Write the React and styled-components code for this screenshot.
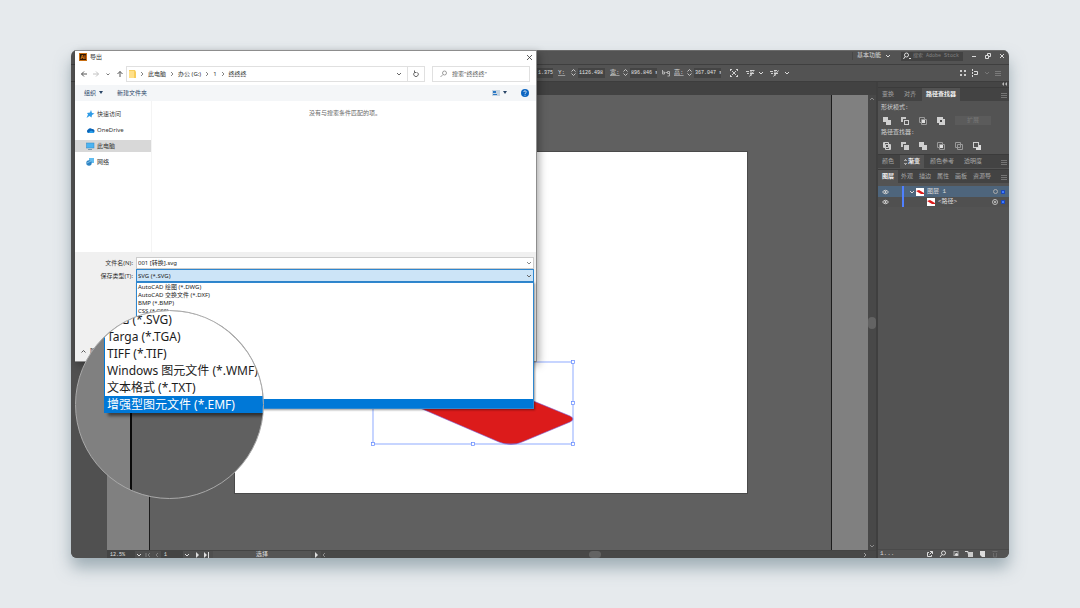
import React from "react";
import styled, { createGlobalStyle, css } from "styled-components";

const mono = '"Liberation Mono", "Noto Sans CJK SC", monospace';
const sans = '"Noto Sans", "Noto Sans CJK SC", sans-serif';

const GlobalStyle = createGlobalStyle`
  *, *::before, *::after { box-sizing: border-box; }
  body { margin: 0; background: #e6eaed; font-family: ${sans}; font-size: 6px; line-height: 8px; }
  button, input, select { font: inherit; color: inherit; margin: 0; padding: 0; border: 0; border-radius: 0; background: none; min-width: 0; }
  ul { margin: 0; padding: 0; list-style: none; }
  a { color: inherit; text-decoration: none; }
`;

const Page = styled.main`
  display: flex;
  min-height: 100vh;
  padding: 50px 71px;
`;

const AppWindow = styled.div`
  position: relative;
  flex: 1;
  display: flex;
  min-width: 0;
  border-radius: 6px;
  box-shadow: 0 10px 16px rgba(90, 115, 128, 0.5);
`;

const Frame = styled.div`
  flex: 1;
  min-width: 0;
  display: flex;
  flex-direction: column;
  overflow: hidden;
  border-radius: 6px;
  background: #535353;
  color: #dcdcdc;
  font-family: ${mono};
`;

const IconSvg = styled.svg`
  display: block;
  flex: none;
`;

const Icon = ({ w = 8, h = 8, sw = 1, stroke = "currentColor", fill = "none", children }) => (
  <IconSvg width={w} height={h} viewBox={`0 0 ${w} ${h}`} strokeWidth={sw} stroke={stroke} fill={fill} aria-hidden="true">
    {children}
  </IconSvg>
);

const Chevron = ({ color = "currentColor" }) => (
  <Icon w={6} h={6} stroke={color}><path d="M1 2l2 2 2-2" /></Icon>
);

const IconButton = styled.button`
  display: flex;
  align-items: center;
  justify-content: center;
  flex: none;
  width: ${(p) => p.$w || 8}px;
  height: 8px;
  opacity: ${(p) => (p.$dim ? 0.35 : 1)};
`;

/* Application bars */

const TitleBar = styled.header`
  display: flex;
  align-items: center;
  justify-content: flex-end;
  height: 15px;
  padding: 0 3px 3px 0;
  border-top: 1px solid #6a6a6a;
  border-bottom: 1px solid #3f3f3f;
`;

const Workspace = styled.button`
  display: flex;
  align-items: center;
  gap: 4px;
  padding: 0 10px 0 4px;
  border-left: 1px solid #474747;
`;

const StockSearch = styled.label`
  display: flex;
  align-items: center;
  width: 62px;
  height: 9px;
  margin-right: 7px;
  padding-left: 2px;
  gap: 2px;
  background: #424242;
  input { width: 48px; font-size: 5px; line-height: 8px; }
  input::placeholder { color: #858585; }
`;

const WindowButtons = styled.div`
  display: flex;
  gap: 6px;
`;

const ControlBar = styled.div`
  display: flex;
  align-items: center;
  justify-content: space-between;
  height: 17px;
  padding: 0 8px 1px 466px;
  border-bottom: 1px solid #3d3d3d;
`;

const Cluster = styled.div`
  display: flex;
  align-items: center;
  gap: ${(p) => p.$gap || 0}px;
`;

const NumberField = styled.label`
  display: flex;
  align-items: center;
  margin-right: 5px;
  > span { min-width: 11px; text-decoration: underline; text-decoration-color: #9a9a9a; }
  svg { margin: 0 2px; }
  input { width: ${(p) => (p.$short ? 16 : 27)}px; height: 10px; padding-left: 1px; font-size: 5px; background: #444; color: #e4e4e4; }
`;

const Stepper = () => (
  <Icon w={5} h={9} stroke="#c4c4c4"><path d="M.5 3.5l2-2 2 2M.5 5.500l2 2 2-2" /></Icon>
);

/* Work area */

const Work = styled.div`
  flex: 1;
  min-height: 0;
  display: flex;
`;

const ToolColumn = styled.div`
  width: 36px;
  flex: none;
  background: #505050;
`;

const Document = styled.section`
  flex: 1;
  min-width: 0;
  display: flex;
  flex-direction: column;
`;

const TabStrip = styled.div`
  height: 13px;
  background: #424242;
`;

const Viewport = styled.div`
  flex: 1;
  display: flex;
  min-height: 0;
`;

const Pasteboard = styled.div`
  flex: 1;
  display: flex;
  align-items: center;
  justify-content: center;
  background: #606060;
  border: solid #1c1c1c;
  border-width: 0 1px;
`;

const Margin = styled.div`
  width: ${(p) => p.$w}px;
  background: #808080;
`;

const Artboard = styled.svg`
  display: block;
  width: 512px;
  height: 341px;
  background: #fff;
  outline: 1px solid #4a4a4a;
`;

const ScrollColumn = styled.div`
  width: 8px;
  display: flex;
  flex-direction: column;
  align-items: center;
  justify-content: space-between;
  background: #484848;
`;

const Thumb = styled.span`
  display: block;
  width: ${(p) => p.$w}px;
  height: ${(p) => p.$h}px;
  border-radius: 4px;
  background: #636363;
`;

const StatusBar = styled.footer`
  display: flex;
  align-items: center;
  height: 8px;
  background: #4f4f4f;
  border-top: 1px solid #444;
`;

const StatusInput = styled.input`
  width: ${(p) => p.$w}px;
  height: 8px;
  padding-left: 3px;
  font-size: 5px;
  background: #444;
  color: #e0e0e0;
`;

const StatusTool = styled.span`
  width: 98px;
  margin-left: 2px;
  text-align: center;
  background: #555;
`;

const ScrollRow = styled.div`
  flex: 1;
  display: flex;
  align-items: center;
  justify-content: space-between;
  height: 8px;
  padding-right: 8px;
  background: #484848;
`;

/* Right panels */

const Panels = styled.aside`
  width: 133px;
  flex: none;
  display: flex;
  flex-direction: column;
  border-left: 2px solid #3f3f3f;
  background: #535353;
`;

const CollapseBar = styled.div`
  display: flex;
  justify-content: flex-end;
  height: 5px;
  padding-right: 2px;
  background: #454545;
`;

const Tabs = styled.div`
  display: flex;
  gap: ${(p) => (p.$tight ? 0 : 2)}px;
  height: 14px;
  margin-top: ${(p) => (p.$tight ? 1 : 0)}px;
  padding-right: 2px;
  background: #434343;
  border-top: 1px solid #3b3b3b;
  > :last-child { margin-left: auto; align-self: center; }
`;

const Tab = styled.button`
  display: flex;
  align-items: center;
  padding: 0 ${(p) => (p.$tight ? 3 : 4)}px;
  white-space: nowrap;
  color: #a6a6a6;
  ${(p) => p.$active && css`background: #535353; color: #f2f2f2; font-weight: 700;`}
`;

const PathfinderBody = styled.div`
  display: flex;
  flex-direction: column;
  gap: 4px;
  padding: 3px 4px 4px 3px;
  color: #cfcfcf;
`;

const ShapeRow = styled.div`
  display: flex;
  align-items: center;
  gap: 10px;
  height: 9px;
  padding-left: 2px;
`;

const ExpandButton = styled.button`
  width: 36px;
  height: 9px;
  background: #5b5b5b;
  color: #777;
`;

const LayerList = styled.ul`
  flex: 1;
  padding-top: 3px;
`;

const Layer = styled.li`
  display: flex;
  align-items: center;
  height: ${(p) => (p.$active ? 11 : 10)}px;
  padding: 0 4px;
  background: ${(p) => (p.$active ? "#4e657c" : "#505050")};
  > i { width: 2px; align-self: stretch; margin: 0 5px 0 13px; background: #4f80ff; }
  > span { flex: 1; padding-left: 3px; }
  > b { width: 4px; height: 4px; margin-left: 3px; background: #3f7bff; border: 1px solid #1d49b8; }
`;

const Twirl = styled.div`
  width: ${(p) => (p.$deep ? 18 : 7)}px;
`;

const PanelFooter = styled.footer`
  display: flex;
  align-items: center;
  gap: 5px;
  height: 9px;
  padding: 0 10px 0 2px;
  border-top: 1px solid #4a4a4a;
  > span { flex: 1; }
`;

/* Export dialog */

const Dialog = styled.section`
  position: absolute;
  left: 4px;
  top: 0;
  width: 462px;
  height: 312px;
  display: flex;
  flex-direction: column;
  background: #fff;
  color: #333;
  border: solid #8d8d8d;
  border-width: 1px 1px 1px 0;
  box-shadow: 2px 3px 8px rgba(0, 0, 0, 0.35);
`;

const DialogTitle = styled.div`
  display: flex;
  align-items: center;
  gap: 3px;
  height: 12px;
  padding: 0 3px 0 4px;
  > span { flex: 1; }
`;

const AppMark = styled.b`
  width: 8px;
  height: 8px;
  border: 1px solid #c86f13;
  background: #2e1500;
  color: #f08a1c;
  font-size: 5px;
  line-height: 6px;
  text-align: center;
`;

const AddressRow = styled.div`
  display: flex;
  align-items: center;
  height: 22px;
  padding: 0 6px 0 5px;
  color: #555;
`;

const NavButtons = styled.div`
  display: flex;
  gap: 4px;
  width: 46px;
`;

const AddressBox = styled.nav`
  flex: 1;
  display: flex;
  align-items: center;
  gap: 4px;
  height: 16px;
  padding-left: 2px;
  border: 1px solid #e0e0e0;
  color: #333;
  > :nth-last-child(2) { margin-left: auto; }
`;

const Refresh = styled.button`
  display: flex;
  align-items: center;
  justify-content: center;
  width: 17px;
  height: 14px;
  border-left: 1px solid #e0e0e0;
`;

const SearchBox = styled.label`
  display: flex;
  align-items: center;
  gap: 4px;
  width: 98px;
  height: 16px;
  margin-left: 7px;
  padding-left: 7px;
  border: 1px solid #e0e0e0;
  color: #888;
  input { flex: 1; }
  input::placeholder { color: #606060; opacity: 1; }
`;

const Toolbar = styled.div`
  display: flex;
  align-items: center;
  gap: 14px;
  height: 16px;
  padding: 0 7px 0 9px;
  background: #f4f6f8;
  color: #2a4668;
  > :nth-child(3) { margin-left: auto; }
  button { display: flex; align-items: center; gap: 3px; }
`;

const Browser = styled.div`
  flex: 1;
  display: flex;
  color: #666;
  > p { flex: 1; margin: 0; padding: 8px 0 0 2px; text-align: center; }
`;

const Places = styled.ul`
  width: 77px;
  padding-top: 7px;
  border-right: 1px solid #f4f4f4;
  color: #333;
`;

const Place = styled.li`
  height: 12px;
  margin-bottom: 4px;
  padding-left: 11px;
  background: ${(p) => (p.$active ? "#d8d8d8" : "transparent")};
  a { display: flex; align-items: center; gap: 2px; height: 12px; }
`;

const SavePane = styled.div`
  position: relative;
  display: flex;
  flex-direction: column;
  height: 109px;
  padding: 4px 2px 6px 0;
  background: #f0f0f0;
`;

const FieldRow = styled.div`
  display: flex;
  align-items: center;
  height: 13px;
  label { width: 61px; padding-right: 3px; text-align: right; }
`;

const fieldBox = css`
  flex: 1;
  height: 12px;
  padding: 0 1px;
  line-height: 10px;
  color: #222;
  display: flex;
  align-items: center;
`;

const FileName = styled.div`
  ${fieldBox}
  border: 1px solid #ccc;
  background: #fff;
  input { flex: 1; }
`;

const FileType = styled.div`
  ${fieldBox}
  height: 13px;
  border: 1px solid #2f87cf;
  background: #cce4f7;
  select { flex: 1; appearance: none; }
`;

const TypeMenu = styled.ul`
  position: absolute;
  top: 30px;
  left: 61px;
  right: 2px;
  display: flex;
  flex-direction: column;
  height: 127px;
  border: 1px solid #2f87cf;
  background: #fff;
  color: #222;
  box-shadow: 1px 1px 2px rgba(0, 0, 0, 0.4);
  li { height: 8px; padding-left: 1px; }
  li[aria-selected="true"] { margin-top: auto; height: 9px; background: #0078d7; }
`;

const HideFolders = styled.button`
  display: flex;
  align-items: center;
  gap: 4px;
  margin: auto auto 0 6px;
`;

/* Magnifier */

const Lens = styled.div`
  position: absolute;
  left: 4px;
  top: 260px;
  width: 189px;
  height: 189px;
  overflow: hidden;
  border: 1px solid #a9a9a9;
  border-radius: 50%;
  background: linear-gradient(to right, #808080 54px, #0a0a0a 54px 56px, #606060 56px);
  color: #1c1c1c;
  font-size: 12px;
  line-height: 17px;
`;

const LensList = styled.ul`
  margin-left: 28px;
  background: #fff;
  box-shadow: 4px 3px 3px rgba(0, 0, 0, 0.5);
  li { height: 17px; padding-left: 2px; border-left: 1px solid #0078d7; white-space: nowrap; }
  li:last-child { background: #0078d7; color: #fff; }
`;

const shapes = {
  unite: <path d="M0 0h5v3h3v5h-5v-3h-3z" fill="#d0d0d0" stroke="none" />,
  minus: <><path d="M0 0h5v2h-3v3h-2z" fill="#c8c8c8" stroke="none" /><rect x="3.5" y="3.5" width="4" height="4" /></>,
  intersect: <><path d="M5.500 2.500v-2h-5v5h2M2.500 2.500h5v5h-5z" stroke="#999" /><rect x="3" y="3" width="3" height="3" fill="#e0e0e0" stroke="none" /></>,
  exclude: <><path d="M0 0h6v2h2v6h-6v-2h-2z" fill="#d0d0d0" stroke="none" /><rect x="3" y="3" width="2" height="2" fill="#444" stroke="none" /></>,
  divide: <><path d="M.5.5h5v5h-5zM2.500 2.500h5v5h-5z" /><path d="M1 1h1v4h-1zM6 3h1v4h-1z" fill="#ccc" stroke="none" /></>,
  trim: <><path d="M0 0h5v2h-3v3h-2z" fill="#c8c8c8" stroke="none" /><rect x="3" y="3" width="5" height="5" fill="#ccc" stroke="none" /></>,
  outline: <path d="M.5.5h5v5h-5zM2.500 2.500h5v5h-5z" stroke="#999" />,
  back: <><rect x=".5" y=".5" width="5" height="5" /><path d="M6 3h2v5h-5v-2h3z" fill="#ddd" stroke="none" /></>,
};

const ShapeButton = ({ kind }) => (
  <IconButton aria-label={kind}><Icon>{shapes[kind]}</Icon></IconButton>
);

const MenuIcon = () => (
  <Icon w={6} h={6} stroke="#8b8b8b" sw={0.7}><path d="M0 1.500h6M0 3.500h6M0 5.500h6" /></Icon>
);

const Eye = () => (
  <Icon w={7} h={6}><path d="M.5 3q3-3.500 6 0q-3 3.500-6 0z" stroke="#ccc" /><circle cx="3.500" cy="3" r="1" fill="#ddd" stroke="none" /></Icon>
);

const LayerThumb = () => (
  <Icon w={8} h={8} stroke="none"><path d="M0 0h8v8h-8z" fill="#fff" /><path d="M0 3l3-1 5 3v1l-3 0z" fill="#dc1b1b" /></Icon>
);

const Caret = () => (
  <Icon w={4} h={4} stroke="none" fill="#2a4668"><path d="M0 0h4l-2 3z" /></Icon>
);

const handles = [[338, 210], [338, 251], [338, 292], [238, 292], [138, 292]];

const types = ["AutoCAD 绘图 (*.DWG)", "AutoCAD 交换文件 (*.DXF)", "BMP (*.BMP)", "CSS (*.CSS)"];
const zoomedTypes = ["SVG (*.SVG)", "Targa (*.TGA)", "TIFF (*.TIF)", "Windows 图元文件 (*.WMF)", "文本格式 (*.TXT)", "增强型图元文件 (*.EMF)"];

const placeIcons = {
  quick: <path d="M5 0l1 3 2.500.5-2.500 1.500-.5 2.500-2-1.500-3 2 1.500-3.500-1-1.500 3-.5z" fill="#2f9be6" stroke="none" />,
  cloud: <><path d="M2 7a2 2 0 0 1 0-3.500a2.500 2.500 0 0 1 4-.5a2 2 0 0 1 1 4z" fill="#0a64b8" stroke="none" /><path d="M2 7l3-2.500 3 1.500q0 1-1 1z" fill="#28a0ec" stroke="none" /></>,
  computer: <><rect x=".5" y="1" width="7.500" height="5" fill="#4cb4f2" stroke="#2f86c4" strokeWidth=".5" /><path d="M2 7.500h4" stroke="#7d99ab" /></>,
  network: <><rect x="3" y="0" width="5" height="5" fill="#63bdf0" stroke="none" /><circle cx="3" cy="5" r="2.700" fill="#2d83c3" stroke="none" /><path d="M1 5l4-2" stroke="#a5dbf8" strokeWidth=".7" /></>,
};

const places = [["quick", "快速访问"], ["cloud", "OneDrive"], ["computer", "此电脑"], ["network", "网络"]];

const Crumb = () => <Icon w={4} h={6} sw={0.8} stroke="#666"><path d="M1 1l2 2-2 2" /></Icon>;

function ApplicationBars() {
  return (
    <>
      <TitleBar>
        <Workspace>基本功能 <Chevron /></Workspace>
        <StockSearch>
          <Icon><circle cx="3.500" cy="3" r="2" /><path d="M2 4.500l-1.500 2.500M6 6.500h2" /></Icon>
          <input aria-label="搜索 Adobe Stock" placeholder="搜索 Adobe Stock" />
        </StockSearch>
        <WindowButtons>
          <IconButton aria-label="最小化"><Icon><path d="M2 4.500h4" /></Icon></IconButton>
          <IconButton aria-label="还原"><Icon><path d="M1.500 3.500h3v3h-3zM3.500 3v-1.500h3v3h-2" /></Icon></IconButton>
          <IconButton aria-label="关闭"><Icon><path d="M2 2l4 4M6 2l-4 4" /></Icon></IconButton>
        </WindowButtons>
      </TitleBar>
      <ControlBar>
        <Cluster>
          <NumberField $short><input aria-label="X" defaultValue="1.375" /></NumberField>
          <NumberField><span>Y:</span><Stepper /><input aria-label="Y" defaultValue="1126.498" /></NumberField>
          <NumberField><span>宽:</span><Stepper /><input aria-label="宽" defaultValue="896.846 s" /></NumberField>
          <Icon stroke="#b0b0b0"><path d="M.5 1v4h2v-2h-2M3.500 3.500h2M5.500 2.500h2v2h-2zM7.500 4v3h-2" /></Icon>
          <Cluster $gap={4}>
            <span />
            <NumberField><span>高:</span><Stepper /><input aria-label="高" defaultValue="367.047 s" /></NumberField>
          </Cluster>
          <Cluster $gap={1}>
            <IconButton $w={16} aria-label="缩放"><Icon sw={0.9}><path d="M0 .5h2M.5 0v2M6 .5h2M7.500 0v2M0 7.500h2M.5 6v2M6 7.500h2M7.500 6v2M2 2l4 4M6 2l-4 4" /></Icon></IconButton>
            <IconButton $w={14} aria-label="对齐到"><Icon w={9} sw={0.9}><path d="M0 2.500h3M1 4.500h2M4 1.500h4.500M4 4.500h4M5 1v6M3.500 7.500l4-5" /></Icon></IconButton>
            <Chevron />
            <IconButton $w={18} aria-label="编辑"><Icon w={9} sw={0.9}><path d="M0 2.500h3M1 4.500h2M4 1.500h3M4 4.500h4M5 1v6M3.500 7.500l5-6" /></Icon></IconButton>
            <Chevron />
          </Cluster>
        </Cluster>
        <Cluster $gap={5}>
          <Icon w={6} h={6} stroke="none" fill="#ccc"><path d="M0 0h2v2h-2zM4 0h2v2h-2zM0 4h2v2h-2zM4 4h2v2h-2z" /></Icon>
          <Icon><path d="M1.500 0v2M1.500 3v2M1.500 6v2M3 2.500h3.500v3h-3.500" /></Icon>
          <Chevron color="#777" />
          <MenuIcon />
        </Cluster>
      </ControlBar>
    </>
  );
}

function DocumentArea() {
  return (
    <Document>
      <TabStrip />
      <Viewport>
        <Margin $w={42} />
        <Pasteboard>
          <Artboard viewBox="0 0 512 341">
            <path
              d="M143 236L194 212Q200 208 208 212L335 264Q341 267 335 270L287 290Q276 295 264 290L143 238Q138 237 143 236z"
              fill="#dc1b1b" stroke="#7a5fd8" strokeWidth=".6"
            />
            <rect x="138" y="210" width="200" height="82" fill="none" stroke="#5f86ff" strokeWidth=".7" />
            {handles.map(([x, y]) => (
              <rect key={`${x}-${y}`} x={x - 1.5} y={y - 1.5} width="3" height="3" fill="#fff" stroke="#5f86ff" strokeWidth=".7" />
            ))}
          </Artboard>
        </Pasteboard>
        <Margin $w={36} />
        <ScrollColumn>
          <Icon w={6} h={8} stroke="#8c8c8c"><path d="M1 5l2-2 2 2" /></Icon>
          <Thumb $w={8} $h={12} />
          <Icon w={6} h={8} stroke="#8c8c8c"><path d="M1 3l2 2 2-2" /></Icon>
        </ScrollColumn>
      </Viewport>
      <StatusBar>
        <StatusInput $w={28} aria-label="缩放比例" defaultValue="12.5%" />
        <IconButton aria-label="缩放菜单"><Chevron /></IconButton>
        <IconButton $dim $w={10} aria-label="第一个"><Icon w={6} h={6}><path d="M1 1v4M5 1l-2 2 2 2" /></Icon></IconButton>
        <IconButton $dim aria-label="上一个"><Icon w={6} h={6}><path d="M4 1l-2 2 2 2" /></Icon></IconButton>
        <StatusInput $w={22} aria-label="画板" defaultValue="1" />
        <IconButton aria-label="画板菜单"><Chevron /></IconButton>
        <IconButton $w={12} aria-label="下一个"><Icon w={6} h={6} stroke="none" fill="#ddd"><path d="M2 0l3 3-3 3z" /></Icon></IconButton>
        <IconButton aria-label="最后一个"><Icon w={6} h={6} stroke="none" fill="#ddd"><path d="M0 0l3 3-3 3zM4 0h1v6h-1z" /></Icon></IconButton>
        <StatusTool>选择</StatusTool>
        <IconButton $w={10} aria-label="状态菜单"><Icon w={6} h={6} stroke="none" fill="#ddd"><path d="M2 0l3 3-3 3z" /></Icon></IconButton>
        <ScrollRow>
          <Icon w={6} h={6} stroke="#8c8c8c"><path d="M4 1l-2 2 2 2" /></Icon>
          <Thumb $w={12} $h={7} />
          <Icon w={6} h={6} stroke="#a0a0a0"><path d="M2 1l2 2-2 2" /></Icon>
        </ScrollRow>
      </StatusBar>
    </Document>
  );
}

function SidePanels() {
  return (
    <Panels>
      <CollapseBar><Icon w={5} h={4} stroke="none" fill="#bbb"><path d="M2 0v4l-2-2zM5 0v4l-2-2z" /></Icon></CollapseBar>
      <Tabs>
        <Tab>变换</Tab>
        <Tab>对齐</Tab>
        <Tab $active>路径查找器</Tab>
        <MenuIcon />
      </Tabs>
      <PathfinderBody>
        <span>形状模式:</span>
        <ShapeRow>
          {["unite", "minus", "intersect", "exclude"].map((k) => <ShapeButton key={k} kind={k} />)}
          <ExpandButton>扩展</ExpandButton>
        </ShapeRow>
        <span>路径查找器:</span>
        <ShapeRow>
          {["divide", "trim", "unite", "intersect", "outline", "back"].map((k) => <ShapeButton key={k} kind={k} />)}
        </ShapeRow>
      </PathfinderBody>
      <Tabs>
        <Tab>颜色</Tab>
        <Tab $active><Icon w={4} h={8} sw={0.8}><path d="M.5 3l1-1.500 1 1.500M.5 5l1 1.500 1-1.500" /></Icon>渐变</Tab>
        <Tab>颜色参考</Tab>
        <Tab>透明度</Tab>
        <MenuIcon />
      </Tabs>
      <Tabs $tight>
        <Tab $active>图层</Tab>
        {["外观", "描边", "属性", "画板", "资源导"].map((t) => <Tab key={t} $tight>{t}</Tab>)}
        <MenuIcon />
      </Tabs>
      <LayerList>
        <Layer $active>
          <Eye /><i />
          <Twirl><Chevron /></Twirl>
          <LayerThumb />
          <span>图层 1</span>
          <Icon w={5} h={5}><circle cx="2.500" cy="2.500" r="2" stroke="#aaa" /></Icon><b />
        </Layer>
        <Layer>
          <Eye /><i />
          <Twirl $deep />
          <LayerThumb />
          <span>&lt;路径&gt;</span>
          <Icon w={6} h={6}><circle cx="3" cy="3" r="2.500" stroke="#bbb" /><circle cx="3" cy="3" r="1" fill="#ccc" stroke="none" /></Icon><b />
        </Layer>
      </LayerList>
      <PanelFooter>
        <span>1...</span>
        <IconButton aria-label="导出"><Icon><path d="M3 2.500h-1.500v4h4v-1.500M4 1.500h2.500v2.500M3.500 4.500l3-3" /></Icon></IconButton>
        <IconButton aria-label="定位"><Icon><circle cx="4.500" cy="3" r="2" /><path d="M3 4.500l-2 2.500" /></Icon></IconButton>
        <IconButton aria-label="蒙版"><Icon><rect x="2" y="1.500" width="4" height="4" stroke="#aaa" /><circle cx="4.500" cy="4.500" r="1.500" fill="#ddd" stroke="none" /></Icon></IconButton>
        <IconButton aria-label="子图层"><Icon><path d="M0 1.500h3v2" /><rect x="3" y="2" width="5" height="5" fill="#ccc" stroke="none" /></Icon></IconButton>
        <IconButton aria-label="新建图层"><Icon><path d="M2 1h5v6h-3l-2-2z" fill="#ddd" stroke="none" /></Icon></IconButton>
        <IconButton $dim aria-label="删除"><Icon><path d="M1.500 1.500h5M2.500 3v4h3v-4" stroke="#999" /></Icon></IconButton>
      </PanelFooter>
    </Panels>
  );
}

function ExportDialog() {
  return (
    <Dialog role="dialog" aria-label="导出">
      <DialogTitle>
        <AppMark>Ai</AppMark>
        <span>导出</span>
        <IconButton aria-label="关闭"><Icon sw={0.8}><path d="M2 2l5 5M7 2l-5 5" /></Icon></IconButton>
      </DialogTitle>
      <AddressRow>
        <NavButtons>
          <IconButton aria-label="后退"><Icon><path d="M7 4h-5.500M4 1.500l-2.500 2.500 2.500 2.500" /></Icon></IconButton>
          <IconButton $dim aria-label="前进"><Icon><path d="M1 4h5.500M4 1.500l2.500 2.500-2.500 2.500" /></Icon></IconButton>
          <IconButton aria-label="最近"><Icon sw={0.8}><path d="M2.500 3.500l1.500 1.500 1.500-1.500" /></Icon></IconButton>
          <IconButton aria-label="向上"><Icon><path d="M4 7v-5.500M1.500 4l2.500-2.500 2.500 2.500" /></Icon></IconButton>
        </NavButtons>
        <AddressBox>
          <Icon w={7} h={8} stroke="none"><path d="M0 0h6l1 2v6h-7z" fill="#f7cd5c" /><path d="M0 1h5v7h-5z" fill="#ffe08a" /></Icon>
          <Crumb /><a href="#pc">此电脑</a>
          <Crumb /><a href="#g">办公 (G:)</a>
          <Crumb /><a href="#1">1</a>
          <Crumb /><a href="#folder">终终终</a>
          <IconButton aria-label="历史"><Chevron color="#666" /></IconButton>
          <Refresh aria-label="刷新"><Icon sw={0.9} stroke="#555"><path d="M5.500 2.500a2.300 2.300 0 1 1-3 0M2.500 .5v2h2" /></Icon></Refresh>
        </AddressBox>
        <SearchBox>
          <Icon sw={0.8}><circle cx="4.500" cy="3" r="2" /><path d="M3 4.500l-2.500 2.500" /></Icon>
          <input aria-label="搜索" placeholder={'搜索"终终终"'} />
        </SearchBox>
      </AddressRow>
      <Toolbar>
        <button>组织 <Caret /></button>
        <button>新建文件夹</button>
        <button aria-label="视图">
          <Icon w={8} h={6} stroke="none"><path d="M0 0h8v6h-8z" fill="#c6d5e2" /><path d="M1 1h3v2h-3zM1 4h4v1h-4z" fill="#2b78c4" /></Icon>
          <Caret />
        </button>
        <button aria-label="帮助"><Icon w={8} h={8} stroke="none"><circle cx="4" cy="4" r="4" fill="#0d66c2" /><path d="M2.800 3a1.200 1.200 0 1 1 1.700 1.100q-.5.2-.5.9M4 5.800v.9" fill="none" stroke="#fff" strokeWidth=".8" /></Icon></button>
      </Toolbar>
      <Browser>
        <Places>
          {places.map(([icon, label]) => (
            <Place key={icon} $active={icon === "computer"}>
              <a href={`#${icon}`}><Icon w={9} h={8}>{placeIcons[icon]}</Icon>{label}</a>
            </Place>
          ))}
        </Places>
        <p>没有与搜索条件匹配的项。</p>
      </Browser>
      <SavePane>
        <FieldRow>
          <label htmlFor="name">文件名(N):</label>
          <FileName><input id="name" defaultValue="001 [转换].svg" /><Chevron color="#888" /></FileName>
        </FieldRow>
        <FieldRow>
          <label htmlFor="type">保存类型(T):</label>
          <FileType>
            <select id="type"><option>SVG (*.SVG)</option></select><Chevron color="#666" />
          </FileType>
        </FieldRow>
        <HideFolders>
          <Icon w={5} h={5} sw={0.8}><path d="M.5 3.500l2-2 2 2" /></Icon>隐藏文件夹
        </HideFolders>
        <TypeMenu role="listbox">
          {types.map((t) => <li key={t} role="option" aria-selected="false">{t}</li>)}
          <li role="option" aria-selected="true" />
        </TypeMenu>
      </SavePane>
    </Dialog>
  );
}

export default function App() {
  return (
    <Page>
      <GlobalStyle />
      <AppWindow>
        <Frame>
          <ApplicationBars />
          <Work>
            <ToolColumn />
            <DocumentArea />
            <SidePanels />
          </Work>
        </Frame>
        <ExportDialog />
        <Lens>
          <LensList>
            {zoomedTypes.map((t) => <li key={t}>{t}</li>)}
          </LensList>
        </Lens>
      </AppWindow>
    </Page>
  );
}
